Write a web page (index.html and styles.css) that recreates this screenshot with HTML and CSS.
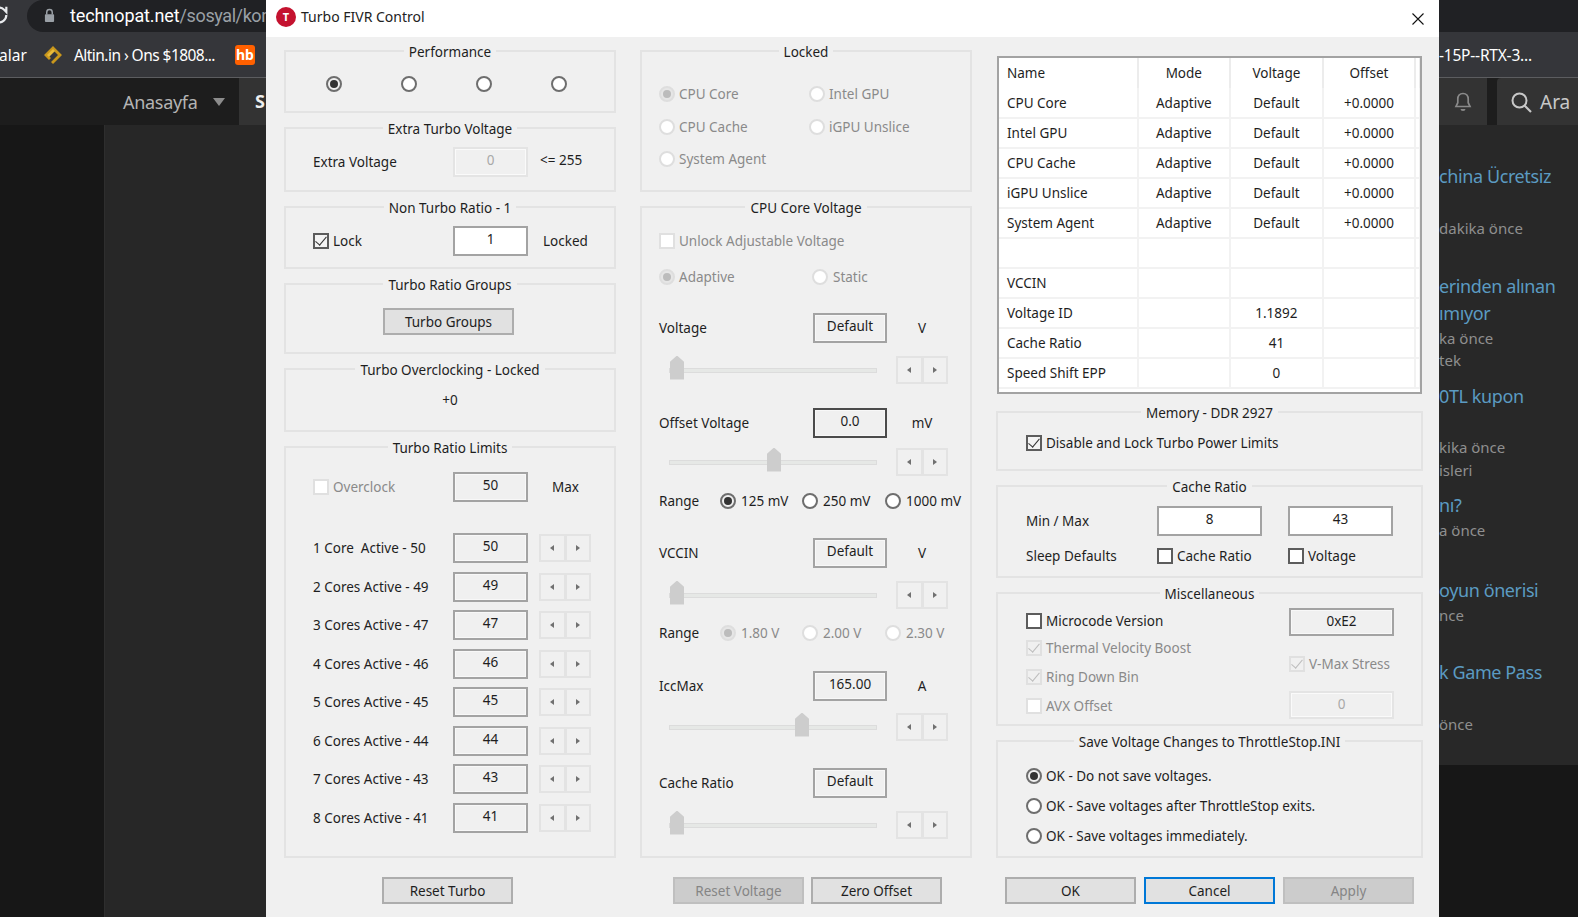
FILE: index.html
```html
<!DOCTYPE html>
<html lang="tr">
<head>
<meta charset="utf-8">
<title>Turbo FIVR Control</title>
<link rel="stylesheet" href="styles.css">
</head>
<body>
<div class="page">
  <header class="toolbar">
    <svg class="reload" viewBox="0 0 24 24" width="22" height="22"><path d="M20 12a8 8 0 1 1-2.4-5.7L20 8.7V3" fill="none" stroke="#e8eaed" stroke-width="2.4"/></svg>
    <div class="omnibox">
      <svg class="lock" viewBox="0 0 12 16" width="11" height="15"><path d="M3 7V4.5a3 3 0 0 1 6 0V7" fill="none" stroke="#9aa0a6" stroke-width="1.6"/><rect x="1" y="6.5" width="10" height="8.5" rx="1" fill="#9aa0a6"/></svg>
      <span class="url">technopat.net<span class="url-path">/sosyal/kon</span></span>
    </div>
  </header>
  <div class="bookmarks">
    <span class="bm-clip">alar</span>
    <svg class="bm-gold" viewBox="0 0 20 20" width="20" height="20"><path d="M10 1l9 9-9 9-2-2 7-7-5-5-5 5 3 3-2 2-5-5z" fill="#c9971c"/><path d="M4 10l6-6 2 2-6 6z" fill="#e8b93a"/></svg>
    <span class="bm-text">Altin.in › Ons $1808...</span>
    <span class="bm-hb">hb</span>
    <span class="bm-right">-15P--RTX-3...</span>
  </div>
  <nav class="navbar">
    <span class="nav-home">Anasayfa</span>
    <span class="nav-caret"></span>
    <span class="nav-tab">S</span>
    <span class="nav-bell">
      <svg viewBox="0 0 20 22" width="20" height="22"><path d="M10 2.5c-3.4 0-5.2 2.6-5.2 5.6v3.6L3 15.5h14l-1.800-3.800V8.100c0-3-1.800-5.600-5.200-5.600z" fill="none" stroke="#8a8a8a" stroke-width="1.700"/><path d="M7.500 18h5a2.500 2 0 0 1-5 0z" fill="#8a8a8a"/></svg>
    </span>
    <span class="nav-search">
      <svg viewBox="0 0 22 22" width="22" height="22"><circle cx="9.500" cy="9.500" r="7" fill="none" stroke="#c8c8c8" stroke-width="2"/><path d="M14.500 14.500L21 21" stroke="#c8c8c8" stroke-width="2.200"/></svg>
      <span>Ara</span>
    </span>
  </nav>
  <div class="content">
    <aside class="rail"></aside>
    <main class="main"></main>
    <div class="side">
      <div class="feed">
        <span class="feed-title">china Ücretsiz</span>
        <span class="feed-meta">dakika önce</span>
        <span class="feed-title">erinden alınan</span>
        <span class="feed-title">ımıyor</span>
        <span class="feed-meta">ka önce</span>
        <span class="feed-meta">tek</span>
        <span class="feed-title">0TL kupon</span>
        <span class="feed-meta">kika önce</span>
        <span class="feed-meta">isleri</span>
        <span class="feed-title">nı?</span>
        <span class="feed-meta">a önce</span>
        <span class="feed-title">oyun önerisi</span>
        <span class="feed-meta">nce</span>
        <span class="feed-title">k Game Pass</span>
        <span class="feed-meta">önce</span>
      </div>
    </div>
  </div>
</div>

<section class="dialog">
  <div class="titlebar">
    <span class="app-icon">T</span>
    <span class="title">Turbo FIVR Control</span>
    <svg class="close" viewBox="0 0 12 12" width="12" height="12"><path d="M0.500 0.500l11 11M11.500 0.500l-11 11" stroke="#111" stroke-width="1.100"/></svg>
  </div>
  <div class="columns">

    <div class="column">
      <div class="group h-perf">
        <div class="legend">Performance</div>
        <div class="perf">
          <span class="radio on"></span><span class="radio"></span><span class="radio"></span><span class="radio"></span>
        </div>
      </div>
      <div class="group h-extra">
        <div class="legend">Extra Turbo Voltage</div>
        <div class="row mt-9">
          <span>Extra Voltage</span>
          <span class="field off">0</span>
          <span class="note raised">&lt;= 255</span>
        </div>
      </div>
      <div class="group h-nonturbo">
        <div class="legend">Non Turbo Ratio - 1</div>
        <div class="row mt-9">
          <span class="opt"><span class="check on"></span>Lock</span>
          <span class="field white">1</span>
          <span class="note wide">Locked</span>
        </div>
      </div>
      <div class="group h-groups">
        <div class="legend">Turbo Ratio Groups</div>
        <div class="btn groups-btn">Turbo Groups</div>
      </div>
      <div class="group h-oc">
        <div class="legend">Turbo Overclocking - Locked</div>
        <div class="oc-value">+0</div>
      </div>
      <div class="group h-limits">
        <div class="legend">Turbo Ratio Limits</div>
        <div class="row mt-15">
          <span class="opt dim"><span class="check off"></span>Overclock</span>
          <span class="field">50</span>
          <span class="note max">Max</span>
        </div>
        <div class="limits">
          <span>1 Core&nbsp; Active - 50</span><span class="field">50</span><span class="spin"><i class="arr-l"></i><i class="arr-r"></i></span>
          <span>2 Cores Active - 49</span><span class="field">49</span><span class="spin"><i class="arr-l"></i><i class="arr-r"></i></span>
          <span>3 Cores Active - 47</span><span class="field">47</span><span class="spin"><i class="arr-l"></i><i class="arr-r"></i></span>
          <span>4 Cores Active - 46</span><span class="field">46</span><span class="spin"><i class="arr-l"></i><i class="arr-r"></i></span>
          <span>5 Cores Active - 45</span><span class="field">45</span><span class="spin"><i class="arr-l"></i><i class="arr-r"></i></span>
          <span>6 Cores Active - 44</span><span class="field">44</span><span class="spin"><i class="arr-l"></i><i class="arr-r"></i></span>
          <span>7 Cores Active - 43</span><span class="field">43</span><span class="spin"><i class="arr-l"></i><i class="arr-r"></i></span>
          <span>8 Cores Active - 41</span><span class="field">41</span><span class="spin"><i class="arr-l"></i><i class="arr-r"></i></span>
        </div>
      </div>
      <div class="footer foot-left">
        <div class="btn">Reset Turbo</div>
      </div>
    </div>

    <div class="column">
      <div class="group h-locked">
        <div class="legend">Locked</div>
        <div class="locked-grid dim">
          <span class="opt"><span class="radio off on"></span>CPU Core</span>
          <span class="opt"><span class="radio off"></span>Intel GPU</span>
          <span class="opt"><span class="radio off"></span>CPU Cache</span>
          <span class="opt"><span class="radio off"></span>iGPU Unslice</span>
          <span class="opt"><span class="radio off"></span>System Agent</span>
        </div>
      </div>
      <div class="group h-voltage">
        <div class="legend">CPU Core Voltage</div>
        <div class="vstack">
          <span class="opt dim line mt-14"><span class="check off"></span>Unlock Adjustable Voltage</span>
          <div class="mode dim line mt-16">
            <span class="opt"><span class="radio off on"></span>Adaptive</span>
            <span class="opt gap-5"><span class="radio off"></span>Static</span>
          </div>
          <div class="vrow mt-26"><span>Voltage</span><span class="field">Default</span><span class="unit">V</span></div>
          <div class="srow mt-13"><div class="slider"><span class="thumb" style="left:0"></span></div><span class="spin"><i class="arr-l"></i><i class="arr-r"></i></span></div>
          <div class="vrow mt-24"><span>Offset Voltage</span><span class="field focus">0.0</span><span class="unit">mV</span></div>
          <div class="srow mt-10"><div class="slider"><span class="thumb" style="left:97px"></span></div><span class="spin"><i class="arr-l"></i><i class="arr-r"></i></span></div>
          <div class="range line mt-15">
            <span>Range</span>
            <span class="opt gap-5"><span class="radio on"></span>125 mV</span>
            <span class="opt gap-5"><span class="radio"></span>250 mV</span>
            <span class="opt gap-5"><span class="radio"></span>1000 mV</span>
          </div>
          <div class="vrow mt-27"><span>VCCIN</span><span class="field">Default</span><span class="unit">V</span></div>
          <div class="srow mt-13"><div class="slider"><span class="thumb" style="left:0"></span></div><span class="spin"><i class="arr-l"></i><i class="arr-r"></i></span></div>
          <div class="range line mt-14">
            <span>Range</span>
            <span class="opt gap-5 dim"><span class="radio off on"></span>1.80 V</span>
            <span class="opt gap-5 dim"><span class="radio off"></span>2.00 V</span>
            <span class="opt gap-5 dim"><span class="radio off"></span>2.30 V</span>
          </div>
          <div class="vrow mt-28"><span>IccMax</span><span class="field">165.00</span><span class="unit">A</span></div>
          <div class="srow mt-12"><div class="slider"><span class="thumb" style="left:125px"></span></div><span class="spin"><i class="arr-l"></i><i class="arr-r"></i></span></div>
          <div class="vrow mt-27"><span>Cache Ratio</span><span class="field">Default</span><span class="unit"></span></div>
          <div class="srow mt-13"><div class="slider"><span class="thumb" style="left:0"></span></div><span class="spin"><i class="arr-l"></i><i class="arr-r"></i></span></div>
        </div>
      </div>
      <div class="footer foot-mid">
        <div class="btn disabled">Reset Voltage</div>
        <div class="btn">Zero Offset</div>
      </div>
    </div>

    <div class="column">
      <div class="listbox">
        <table class="grid">
          <colgroup><col class="c-name"><col class="c-val"><col class="c-val"><col class="c-val"><col class="c-end"></colgroup>
          <thead>
            <tr><th class="name">Name</th><th>Mode</th><th>Voltage</th><th>Offset</th><th></th></tr>
          </thead>
          <tbody>
            <tr><td class="name">CPU Core</td><td>Adaptive</td><td>Default</td><td>+0.0000</td><td></td></tr>
            <tr><td class="name">Intel GPU</td><td>Adaptive</td><td>Default</td><td>+0.0000</td><td></td></tr>
            <tr><td class="name">CPU Cache</td><td>Adaptive</td><td>Default</td><td>+0.0000</td><td></td></tr>
            <tr><td class="name">iGPU Unslice</td><td>Adaptive</td><td>Default</td><td>+0.0000</td><td></td></tr>
            <tr><td class="name">System Agent</td><td>Adaptive</td><td>Default</td><td>+0.0000</td><td></td></tr>
            <tr><td class="name"></td><td></td><td></td><td></td><td></td></tr>
            <tr><td class="name">VCCIN</td><td></td><td></td><td></td><td></td></tr>
            <tr><td class="name">Voltage ID</td><td></td><td>1.1892</td><td></td><td></td></tr>
            <tr><td class="name">Cache Ratio</td><td></td><td>41</td><td></td><td></td></tr>
            <tr><td class="name">Speed Shift EPP</td><td></td><td>0</td><td></td><td></td></tr>
          </tbody>
        </table>
      </div>
      <div class="group h-memory">
        <div class="legend">Memory - DDR 2927</div>
        <div class="inset line mt-11"><span class="opt"><span class="check on"></span>Disable and Lock Turbo Power Limits</span></div>
      </div>
      <div class="group h-cache">
        <div class="legend">Cache Ratio</div>
        <div class="cache-grid">
          <span>Min / Max</span><span class="field white">8</span><span></span><span class="field white">43</span>
          <span>Sleep Defaults</span><span class="opt"><span class="check"></span>Cache Ratio</span><span></span><span class="opt"><span class="check"></span>Voltage</span>
        </div>
      </div>
      <div class="group h-misc">
        <div class="legend">Miscellaneous</div>
        <div class="misc">
          <div class="misc-left">
            <span class="opt"><span class="check"></span>Microcode Version</span>
            <span class="opt dim"><span class="check off on"></span>Thermal Velocity Boost</span>
            <span class="opt dim"><span class="check off on"></span>Ring Down Bin</span>
            <span class="opt dim"><span class="check off"></span>AVX Offset</span>
          </div>
          <div class="misc-right">
            <span class="field short centered">0xE2</span>
            <span class="opt dim line"><span class="check off on"></span>V-Max Stress</span>
            <span class="field short off">0</span>
          </div>
        </div>
      </div>
      <div class="group h-save">
        <div class="legend">Save Voltage Changes to ThrottleStop.INI</div>
        <div class="save">
          <span class="opt"><span class="radio on"></span>OK - Do not save voltages.</span>
          <span class="opt"><span class="radio"></span>OK - Save voltages after ThrottleStop exits.</span>
          <span class="opt"><span class="radio"></span>OK - Save voltages immediately.</span>
        </div>
      </div>
      <div class="footer foot-right">
        <div class="btn">OK</div>
        <div class="btn default">Cancel</div>
        <div class="btn disabled">Apply</div>
      </div>
    </div>

  </div>
</section>
</body>
</html>
```

FILE: styles.css
```css
* { box-sizing: border-box; }
html, body { margin: 0; height: 100%; overflow: hidden; }
body { background: #171717; font-family: "Noto Sans", "Open Sans", sans-serif; }

/* browser behind the dialog */
.page { width: 1578px; height: 917px; display: flex; flex-direction: column; color: #fff; overflow: hidden; }
.toolbar { height: 32px; background: #35363a; display: flex; align-items: center; padding-left: 0; flex: none; }
.reload { margin-left: -12px; margin-top: -3px; flex: none; }
.omnibox { margin-left: 17px; flex: 1; height: 32px; background: #202124; border-radius: 16px 0 0 16px; display: flex; align-items: center; margin-top: -1px; padding-left: 17px; overflow: hidden; }
.lock { flex: none; }
.url { margin-left: 15px; font: 18px/32px Roboto, sans-serif; white-space: nowrap; color: #fff; letter-spacing: -0.1px; }
.url-path { color: #9aa0a6; letter-spacing: -0.4px; }

.bookmarks { height: 46px; flex: none; background: #35363a; border-bottom: 1px solid #5c5d60; display: flex; align-items: center; font: 15.5px/20px "Noto Sans", sans-serif; }
.bm-clip { width: 44px; margin-left: -1px; }
.bm-gold { flex: none; }
.bm-text { margin-left: 11px; width: 161px; white-space: nowrap; letter-spacing: -0.55px; }
.bm-hb { width: 20px; height: 20px; border-radius: 3px; background: #ff6000; font: 700 14px/20px "Noto Sans", sans-serif; text-align: center; }
.bm-right { margin-left: auto; width: 139px; white-space: nowrap; letter-spacing: -0.2px; }

.navbar { height: 47px; flex: none; background: #1d1d1d; display: flex; align-items: center; padding-left: 123px; font: 18px/24px "Noto Sans", sans-serif; color: #b4b4b4; }
.nav-home { width: 90px; white-space: nowrap; letter-spacing: -0.3px; }
.nav-caret { width: 0; height: 0; border: 6px solid transparent; border-top: 8px solid #8c8c8c; border-bottom: 0; }
.nav-tab { margin-left: 14px; width: 60px; height: 47px; background: #333; color: #eee; font-weight: 700; line-height: 47px; padding-left: 16px; }
.nav-bell { margin-left: auto; width: 48px; height: 47px; background: #333; display: flex; align-items: center; justify-content: center; }
.nav-search { margin-left: 10px; width: 81px; height: 47px; background: #333; border-radius: 4px 0 0 0; display: flex; align-items: center; gap: 8px; padding-left: 13px; font-size: 19px; color: #c8c8c8; }

.content { flex: 1; display: flex; min-height: 0; }
.rail { width: 105px; background: #171717; border-right: 1px solid #2e2e2e; }
.main { flex: 1; background: #272727; }
.side { width: 139px; background: #171717; }
.feed { height: 640px; background: #282828; padding-top: 51px; display: grid; grid-template-rows: 52px 58px 27px 25px 22px 36px 51px 23px 35px 25px 60px 25px 57px 52px 1px; overflow: hidden; line-height: 0; white-space: nowrap; }
.feed-title { color: #5b9bc2; font-size: 18px; letter-spacing: -0.4px; }
.feed-meta { color: #8f8f8f; font-size: 15px; }

/* dialog */
.dialog { position: absolute; left: 266px; top: 0; width: 1173px; height: 917px; background: #f0f0f0; color: #1e1e1e; font: 13.5px/18px "Noto Sans", sans-serif; }
.titlebar { height: 37px; background: #fff; display: flex; align-items: center; padding-left: 10px; }
.app-icon { width: 20px; height: 20px; border-radius: 50%; background: #c4122f; color: #fff; font: 700 11px/20px "Noto Sans", sans-serif; text-align: center; margin-top: -3px; }
.title { margin: -3px 0 0 5px; font-size: 14px; color: #222; }
.close { margin-left: auto; margin-right: 15px; }

.columns { display: grid; grid-template-columns: 332px 332px 427px; column-gap: 24px; padding: 13px 0 0 18px; }
.column { display: flex; flex-direction: column; gap: 14px; }

.group { border: 2px solid #e3e3e3; display: flex; flex-direction: column; }
.legend { width: fit-content; margin: -9px auto 0; padding: 0 5px; background: #f0f0f0; white-space: nowrap; flex: none; height: 18px; }
.h-perf { height: 63px; }
.h-extra { height: 65px; }
.h-nonturbo { height: 63px; }
.h-groups { height: 71px; }
.h-oc { height: 64px; }
.h-limits { height: 412px; }
.h-locked { height: 142px; }
.h-voltage { height: 652px; }
.h-memory { height: 60px; }
.h-cache { height: 93px; }
.h-misc { height: 134px; }
.h-save { height: 118px; }

.mt-9 { margin-top: 9px; }
.mt-10 { margin-top: 10px; }
.mt-11 { margin-top: 11px; }
.mt-12 { margin-top: 12px; }
.mt-13 { margin-top: 13px; }
.mt-14 { margin-top: 14px; }
.mt-15 { margin-top: 15px; }
.mt-16 { margin-top: 16px; }
.mt-24 { margin-top: 24px; }
.mt-26 { margin-top: 26px; }
.mt-27 { margin-top: 27px; }
.mt-28 { margin-top: 28px; }

.line { height: 20px; display: flex; align-items: center; }
.dim { color: #8a8a8a; }

.opt { display: flex; align-items: center; gap: 4px; white-space: nowrap; height: 20px; }
.gap-5 { gap: 5px; }

.radio { width: 16px; height: 16px; flex: none; border-radius: 50%; border: 2px solid #6e6e6e; background: #fff; display: flex; align-items: center; justify-content: center; }
.radio.on { background: #f0f0f0; }
.radio.on::after { content: ""; width: 8px; height: 8px; border-radius: 50%; background: #333; }
.radio.off { border-color: #dedede; }
.radio.off.on { background: #e6e6e6; }
.radio.off.on::after { background: #bcbcbc; }

.check { width: 16px; height: 16px; flex: none; border: 2px solid #5c5c5c; background: #fff; position: relative; }
.check.on { background: #f4f4f4; }
.check.on::after { content: ""; position: absolute; left: 3px; top: -1px; width: 5px; height: 10px; border: solid #333; border-width: 0 1.5px 1.5px 0; transform: rotate(40deg); }
.check.off { border-color: #e0e0e0; }
.check.off.on { background: #f0f0f0; }
.check.off.on::after { border-color: #bdbdbd; }

.field { height: 30px; border: 2px solid #a3a3a3; background: #f0f0f0; box-shadow: inset 0 0 0 1px #f8f8f8; text-align: center; line-height: 23px; white-space: nowrap; }
.field.white { background: #fff; box-shadow: none; }
.field.off { border-color: #e4e4e4; color: #a8a8a8; box-shadow: inset 0 0 0 1px #fafafa; }
.field.focus { border-color: #4b4b4b; }
.field.short { height: 28px; }
.field.centered { line-height: 23px; }

.btn { width: 131px; height: 27px; background: #e1e1e1; border: 2px solid #adadad; text-align: center; line-height: 24px; white-space: nowrap; flex: none; }
.btn.disabled { background: #cccccc; border-color: #bfbfbf; color: #858585; }
.btn.default { border-color: #0078d7; }
.groups-btn { margin: 14px 0 0 97px; }

.row { display: grid; grid-template-columns: 140px 75px 1fr; align-items: center; margin-left: 27px; white-space: nowrap; }
.note { padding-left: 12px; }
.note.raised { margin-top: -4px; }
.note.wide { padding-left: 15px; }
.note.max { padding-left: 24px; }
.oc-value { margin-top: 12px; text-align: center; }

.perf { display: grid; grid-template-columns: repeat(4, 75px); margin: 15px 0 0 40px; }

.limits { display: grid; grid-template-columns: 140px 75px 1fr; grid-auto-rows: 30px; row-gap: 8.5px; align-items: center; margin: 31px 0 0 27px; white-space: nowrap; }
.limits .spin { margin-left: 11px; }

.spin { width: 52px; height: 28px; display: flex; flex: none; }
.spin i { flex: 1; border: 2px solid #e3e3e3; display: flex; align-items: center; justify-content: center; }
.spin i + i { margin-left: -1px; }
.arr-l::after, .arr-r::after { content: ""; border: 3.5px solid transparent; }
.arr-l::after { border-right: 4px solid #707070; border-left: 0; }
.arr-r::after { border-left: 4px solid #707070; border-right: 0; }

.locked-grid { display: grid; grid-template-columns: 150px 1fr; grid-auto-rows: 20px; row-gap: 12.5px; margin: 23px 0 0 17px; }

.vstack { display: flex; flex-direction: column; margin-left: 17px; }
.mode { display: grid; grid-template-columns: 153px 1fr; }
.vrow { display: grid; grid-template-columns: 154px 74px 70px; align-items: center; height: 30px; }
.unit { text-align: center; }
.srow { display: flex; align-items: center; gap: 19px; margin-left: 10px; height: 28px; }
.slider { width: 208px; height: 5px; background: #e6e8e6; border: 1px solid #dcdcdc; position: relative; }
.thumb { position: absolute; top: -13px; width: 14px; height: 24px; background: #cdcdcd; clip-path: polygon(50% 0, 100% 26%, 100% 100%, 0 100%, 0 26%); }
.range { display: grid; grid-template-columns: 61px 82px 83px 1fr; }

.foot-left, .foot-mid, .foot-right { display: flex; margin-top: 5px; }
.foot-left { padding-left: 98px; }
.foot-mid { padding-left: 33px; gap: 7px; }
.foot-right { padding-left: 9px; gap: 8px; }

.listbox { height: 338px; margin: 6px 1px 3px 1px; border: 2px solid #a3a3a3; background: #fff; overflow: hidden; }
.grid { border-collapse: collapse; table-layout: fixed; width: 421px; }
.c-name { width: 138.500px; }
.c-val { width: 92.600px; }
.c-end { width: 4.700px; }
.grid th, .grid td { height: 30px; padding: 0; font-weight: 400; text-align: center; white-space: nowrap; }
.grid th { border-right: 2px solid #ececec; }
.grid td { border-bottom: 2px solid #f2f2f2; border-right: 2px solid #f2f2f2; }
.grid .name { text-align: left; padding-left: 8px; }

.inset { margin-left: 28px; }
.cache-grid { display: grid; grid-template-columns: 131px 105px 26px 105px; grid-template-rows: 30px 20px; row-gap: 10px; align-items: center; margin: 10px 0 0 28px; white-space: nowrap; }
.misc { display: grid; grid-template-columns: 263px 105px; margin: 5px 0 0 28px; }
.misc-left { display: grid; grid-template-rows: 27px 29px 29px 20px; padding-top: 3px; }
.misc-right { display: flex; flex-direction: column; justify-content: space-between; height: 111px; }
.save { display: flex; flex-direction: column; gap: 10px; margin: 15px 0 0 28px; }
```
